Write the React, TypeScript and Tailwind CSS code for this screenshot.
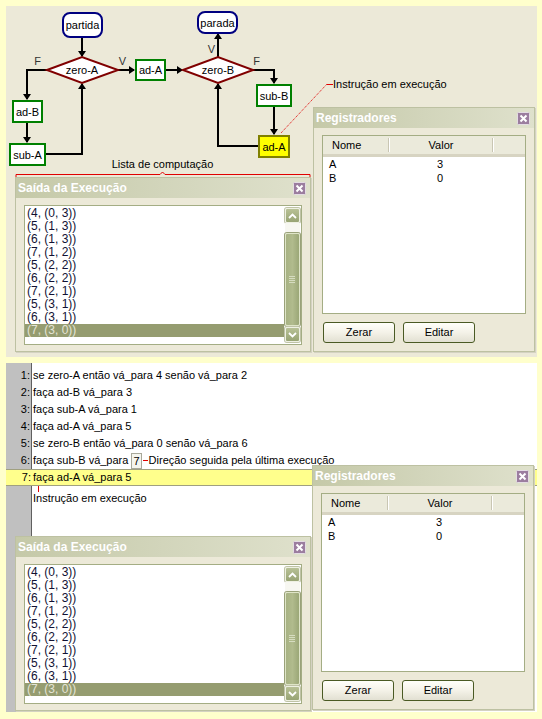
import React from "react";

const OUTPUT = [
  "(4, (0, 3))",
  "(5, (1, 3))",
  "(6, (1, 3))",
  "(7, (1, 2))",
  "(5, (2, 2))",
  "(6, (2, 2))",
  "(7, (2, 1))",
  "(5, (3, 1))",
  "(6, (3, 1))",
  "(7, (3, 0))",
];

const CODE = [
  "se zero-A então vá_para 4 senão vá_para 2",
  "faça ad-B vá_para 3",
  "faça sub-A vá_para 1",
  "faça ad-A vá_para 5",
  "se zero-B então vá_para 0 senão vá_para 6",
];

const REGS = [
  { name: "A", value: "3" },
  { name: "B", value: "0" },
];

function CloseBox() {
  return (
    <svg width="13" height="13" viewBox="0 0 13 13">
      <rect x="0.5" y="0.5" width="12" height="12" rx="1" fill="#9b7d9f" stroke="#e4dce4" />
      <path d="M3.5 3.5 L9.5 9.5 M9.5 3.5 L3.5 9.5" stroke="#fff" strokeWidth="2" />
    </svg>
  );
}

function ScrollBtn({ up }: { up?: boolean }) {
  return (
    <div className="flex h-[15px] w-[15px] items-center justify-center rounded-[2px] border border-[#eef0e2] bg-gradient-to-b from-[#b8c196] to-[#98a474] shadow-[0_0_0_1px_#bfc3a6]">
      <svg width="9" height="6" viewBox="0 0 9 6">
        <path d={up ? "M1 5 L4.5 1.5 L8 5" : "M1 1 L4.5 4.5 L8 1"} stroke="#fff" strokeWidth="1.8" fill="none" />
      </svg>
    </div>
  );
}

function Win({ title, className, children }: { title: string; className: string; children: React.ReactNode }) {
  return (
    <div className={`flex flex-col border border-[#bdc1a2] bg-[#ECE9D8] shadow-[1px_1px_0_#d4d2c2] ${className}`}>
      <div className="flex h-[20px] shrink-0 items-center justify-between bg-gradient-to-r from-[#c5c9a8] via-[#d2d5bb] to-[#dfe1cc] pl-[2px] pr-[4px]">
        <span className="text-[12px] font-bold text-white [text-shadow:0_0_1px_#c9cbb2]">{title}</span>
        <CloseBox />
      </div>
      {children}
    </div>
  );
}

function OutputWin() {
  return (
    <Win title="Saída da Execução" className="h-[175px] w-[296px]">
      <div className="mx-[8px] mt-[7px] flex h-[140px] border border-[#a4ad84] bg-white">
        <div className="flex-1 pt-[1px]">
          {OUTPUT.map((o, i) => (
            <div
              key={i}
              className={`h-[13px] pl-[2px] text-[12px] leading-[13px] ${
                i === OUTPUT.length - 1 ? "bg-[#959c70] text-[#e4e4d6]" : "text-[#111133]"
              }`}
            >
              {o}
            </div>
          ))}
        </div>
        <div className="flex w-[17px] flex-col items-center py-[2px] pr-[1px]">
          <ScrollBtn up />
          <div className="w-[15px] flex-1 bg-[#f7f7f1] pt-[10px] pb-[1px]">
            <div className="flex h-full items-center justify-center rounded-[2px] border border-[#dfe5c8] bg-gradient-to-r from-[#a7b283] via-[#b1bb8d] to-[#9ba777] shadow-[0_0_0_1px_#9aa27a]">
              <div className="flex flex-col gap-[1px]">
                <div className="h-[1px] w-[6px] bg-[#d6dcc0]" />
                <div className="h-[1px] w-[6px] bg-[#d6dcc0]" />
                <div className="h-[1px] w-[6px] bg-[#d6dcc0]" />
                <div className="h-[1px] w-[6px] bg-[#d6dcc0]" />
              </div>
            </div>
          </div>
          <ScrollBtn />
        </div>
      </div>
    </Win>
  );
}

function XpButton({ label }: { label: string }) {
  return (
    <button className="h-[21px] w-[72px] rounded-[3px] border border-[#4a5a24] bg-gradient-to-b from-[#fffffa] via-[#f4f2e8] to-[#e2e0d2] text-[11px] text-black">
      {label}
    </button>
  );
}

function RegsWin() {
  return (
    <Win title="Registradores" className="h-[245px] w-[222px]">
      <div className="mx-[8px] mt-[7px] h-[179px] border border-[#a4ad84] bg-white">
        <div className="flex h-[21px] items-center border-b-[3px] border-[#d7d4c2] bg-[#ebeadb] text-[11px] text-black">
          <div className="w-[65px] pl-[9px]">Nome</div>
          <div className="h-[14px] w-[2px] border-l border-[#c9c6b3] bg-white" />
          <div className="w-[102px] text-center">Valor</div>
          <div className="h-[14px] w-[2px] border-l border-[#c9c6b3] bg-white" />
        </div>
        {REGS.map((r) => (
          <div key={r.name} className="flex h-[14px] items-center text-[11px] text-black">
            <div className="w-[66px] pl-[6px]">{r.name}</div>
            <div className="w-[102px] text-center">{r.value}</div>
          </div>
        ))}
      </div>
      <div className="mt-[8px] flex gap-[8px] pl-[9px]">
        <XpButton label="Zerar" />
        <XpButton label="Editar" />
      </div>
    </Win>
  );
}

function Arrow({ x, y, dir }: { x: number; y: number; dir: "d" | "u" | "r" }) {
  const pts =
    dir === "d"
      ? `${x - 4},${y - 6} ${x + 4},${y - 6} ${x},${y}`
      : dir === "u"
      ? `${x - 4},${y + 6} ${x + 4},${y + 6} ${x},${y}`
      : `${x - 6},${y - 4} ${x - 6},${y + 4} ${x},${y}`;
  return <polygon points={pts} fill="#000" />;
}

function Flowchart() {
  const t = { fontFamily: "'Liberation Sans', Arial, sans-serif", fontSize: 11 };
  return (
    <svg className="absolute left-0 top-0" width="531" height="180" viewBox="0 0 531 180">
      <g stroke="#000" strokeWidth="2" fill="none">
        <path d="M76 31 V50" />
        <path d="M41 64 H21 V93" />
        <path d="M21 116 V136" />
        <path d="M39 148 H76 V78" />
        <path d="M112 64 H128" />
        <path d="M159 64 H176" />
        <path d="M212 51 V28" />
        <path d="M247 64 H268 V77" />
        <path d="M268 100 V128" />
        <path d="M252 140 H212 V78" />
      </g>
      <Arrow x={76} y={51} dir="d" />
      <Arrow x={21} y={94} dir="d" />
      <Arrow x={21} y={137} dir="d" />
      <Arrow x={76} y={77} dir="u" />
      <Arrow x={129} y={64} dir="r" />
      <Arrow x={177} y={64} dir="r" />
      <Arrow x={212} y={27} dir="u" />
      <Arrow x={268} y={78} dir="d" />
      <Arrow x={268} y={129} dir="d" />
      <Arrow x={212} y={77} dir="u" />

      <rect x="57" y="7" width="39" height="24" rx="7" fill="#fff" stroke="#000080" strokeWidth="2" />
      <text x="76.5" y="23" textAnchor="middle" style={t} fill="#000">partida</text>
      <rect x="192" y="6" width="39" height="21" rx="7" fill="#fff" stroke="#000080" strokeWidth="2" />
      <text x="211.5" y="20.5" textAnchor="middle" style={t} fill="#000">parada</text>

      <polygon points="41,64 76,51 112,64 76,77" fill="#fff" stroke="#800000" strokeWidth="2" />
      <text x="76" y="68" textAnchor="middle" style={t} fill="#000">zero-A</text>
      <polygon points="177,64 212,51 247,64 212,77" fill="#fff" stroke="#800000" strokeWidth="2" />
      <text x="212" y="68" textAnchor="middle" style={t} fill="#000">zero-B</text>

      <rect x="130" y="54" width="29" height="20" fill="#fff" stroke="#008000" strokeWidth="2" />
      <text x="144.5" y="68" textAnchor="middle" style={t} fill="#000">ad-A</text>
      <rect x="7" y="95" width="29" height="21" fill="#fff" stroke="#008000" strokeWidth="2" />
      <text x="21.5" y="109.5" textAnchor="middle" style={t} fill="#000">ad-B</text>
      <rect x="4" y="138" width="35" height="21" fill="#fff" stroke="#008000" strokeWidth="2" />
      <text x="21.5" y="152.5" textAnchor="middle" style={t} fill="#000">sub-A</text>
      <rect x="251" y="79" width="34" height="21" fill="#fff" stroke="#008000" strokeWidth="2" />
      <text x="268" y="93.5" textAnchor="middle" style={t} fill="#000">sub-B</text>
      <rect x="253" y="130" width="30" height="21" fill="#ffff00" stroke="#808000" strokeWidth="2" />
      <text x="268" y="144.5" textAnchor="middle" style={t} fill="#000">ad-A</text>

      <text x="31.5" y="59" textAnchor="middle" style={t} fill="#333">F</text>
      <text x="116.5" y="59" textAnchor="middle" style={t} fill="#333">V</text>
      <text x="205.5" y="47" textAnchor="middle" style={t} fill="#333">V</text>
      <text x="250.5" y="59" textAnchor="middle" style={t} fill="#333">F</text>

      <path d="M275 127 L321 78" stroke="#e00000" strokeWidth="1" strokeDasharray="1 1" fill="none" />
      <path d="M321 78.5 H327" stroke="#e00000" strokeWidth="1" />
      <text x="327" y="82" style={t} fill="#000">Instrução em execução</text>

      <text x="156.5" y="162" textAnchor="middle" style={t} fill="#000">Lista de computação</text>
      <path d="M10 171 V168.5 H154 L156.5 166 L159 168.5 H304 V171" stroke="#e00000" strokeWidth="1" fill="none" />
    </svg>
  );
}

function Gutter({ children, hl }: { children?: React.ReactNode; hl?: boolean }) {
  return (
    <div
      className={`w-[26px] shrink-0 pr-[1px] text-right ${
        hl ? "" : "border-r border-[#606060] bg-[#c0c0c0]"
      }`}
    >
      {children}
    </div>
  );
}

function Editor() {
  return (
    <div className="relative flex h-[349px] w-[531px] flex-col bg-white text-[11px] text-black">
      <div className="flex h-[4px]">
        <Gutter />
      </div>
      {CODE.map((c, i) => (
        <div key={i} className="flex h-[17px] items-center leading-[17px]">
          <Gutter>{i + 1}:</Gutter>
          <div className="pl-[1px]">{c}</div>
        </div>
      ))}
      <div className="flex h-[17px] items-center leading-[17px]">
        <Gutter>6:</Gutter>
        <div className="flex items-center pl-[1px]">
          <span>faça sub-B vá_para&nbsp;</span>
          <span className="flex h-[16px] items-center border border-[#a8a89a] bg-[#f5f5ee] px-[1px] leading-[14px]">7</span>
          <span className="mx-[1px] h-[1px] w-[5px] bg-[#e00000]" />
          <span>Direção seguida pela última execução</span>
        </div>
      </div>
      <div className="flex h-[17px] items-center border-y border-[#a0a080] bg-[#ffff8c] leading-[15px]">
        <Gutter hl>7:</Gutter>
        <div className="pl-[1px]">faça ad-A vá_para 5</div>
      </div>
      <div className="flex flex-1">
        <Gutter />
        <div className="flex flex-col pl-[1px]">
          <div className="ml-[5px] h-[6px] w-[1px] bg-[#e00000]" />
          <div className="leading-[13px]">Instrução em execução</div>
        </div>
      </div>
      <div className="absolute bottom-0 left-[9px] flex items-end gap-[1px] pb-[1px]">
        <OutputWin />
        <div className="pb-[1px]">
          <RegsWin />
        </div>
      </div>
    </div>
  );
}

export default function App() {
  return (
    <div className="min-h-[719px] w-[542px] bg-[#ffffcc] p-[6px] font-['Liberation_Sans',Arial,sans-serif]">
      <div className="relative flex h-[351px] w-[531px] flex-col justify-end bg-[#ECE9D8] pb-[5px] pl-[9px]">
        <Flowchart />
        <div className="flex items-end gap-[2px]">
          <OutputWin />
          <RegsWin />
        </div>
      </div>
      <div className="mt-[6px]">
        <Editor />
      </div>
    </div>
  );
}
